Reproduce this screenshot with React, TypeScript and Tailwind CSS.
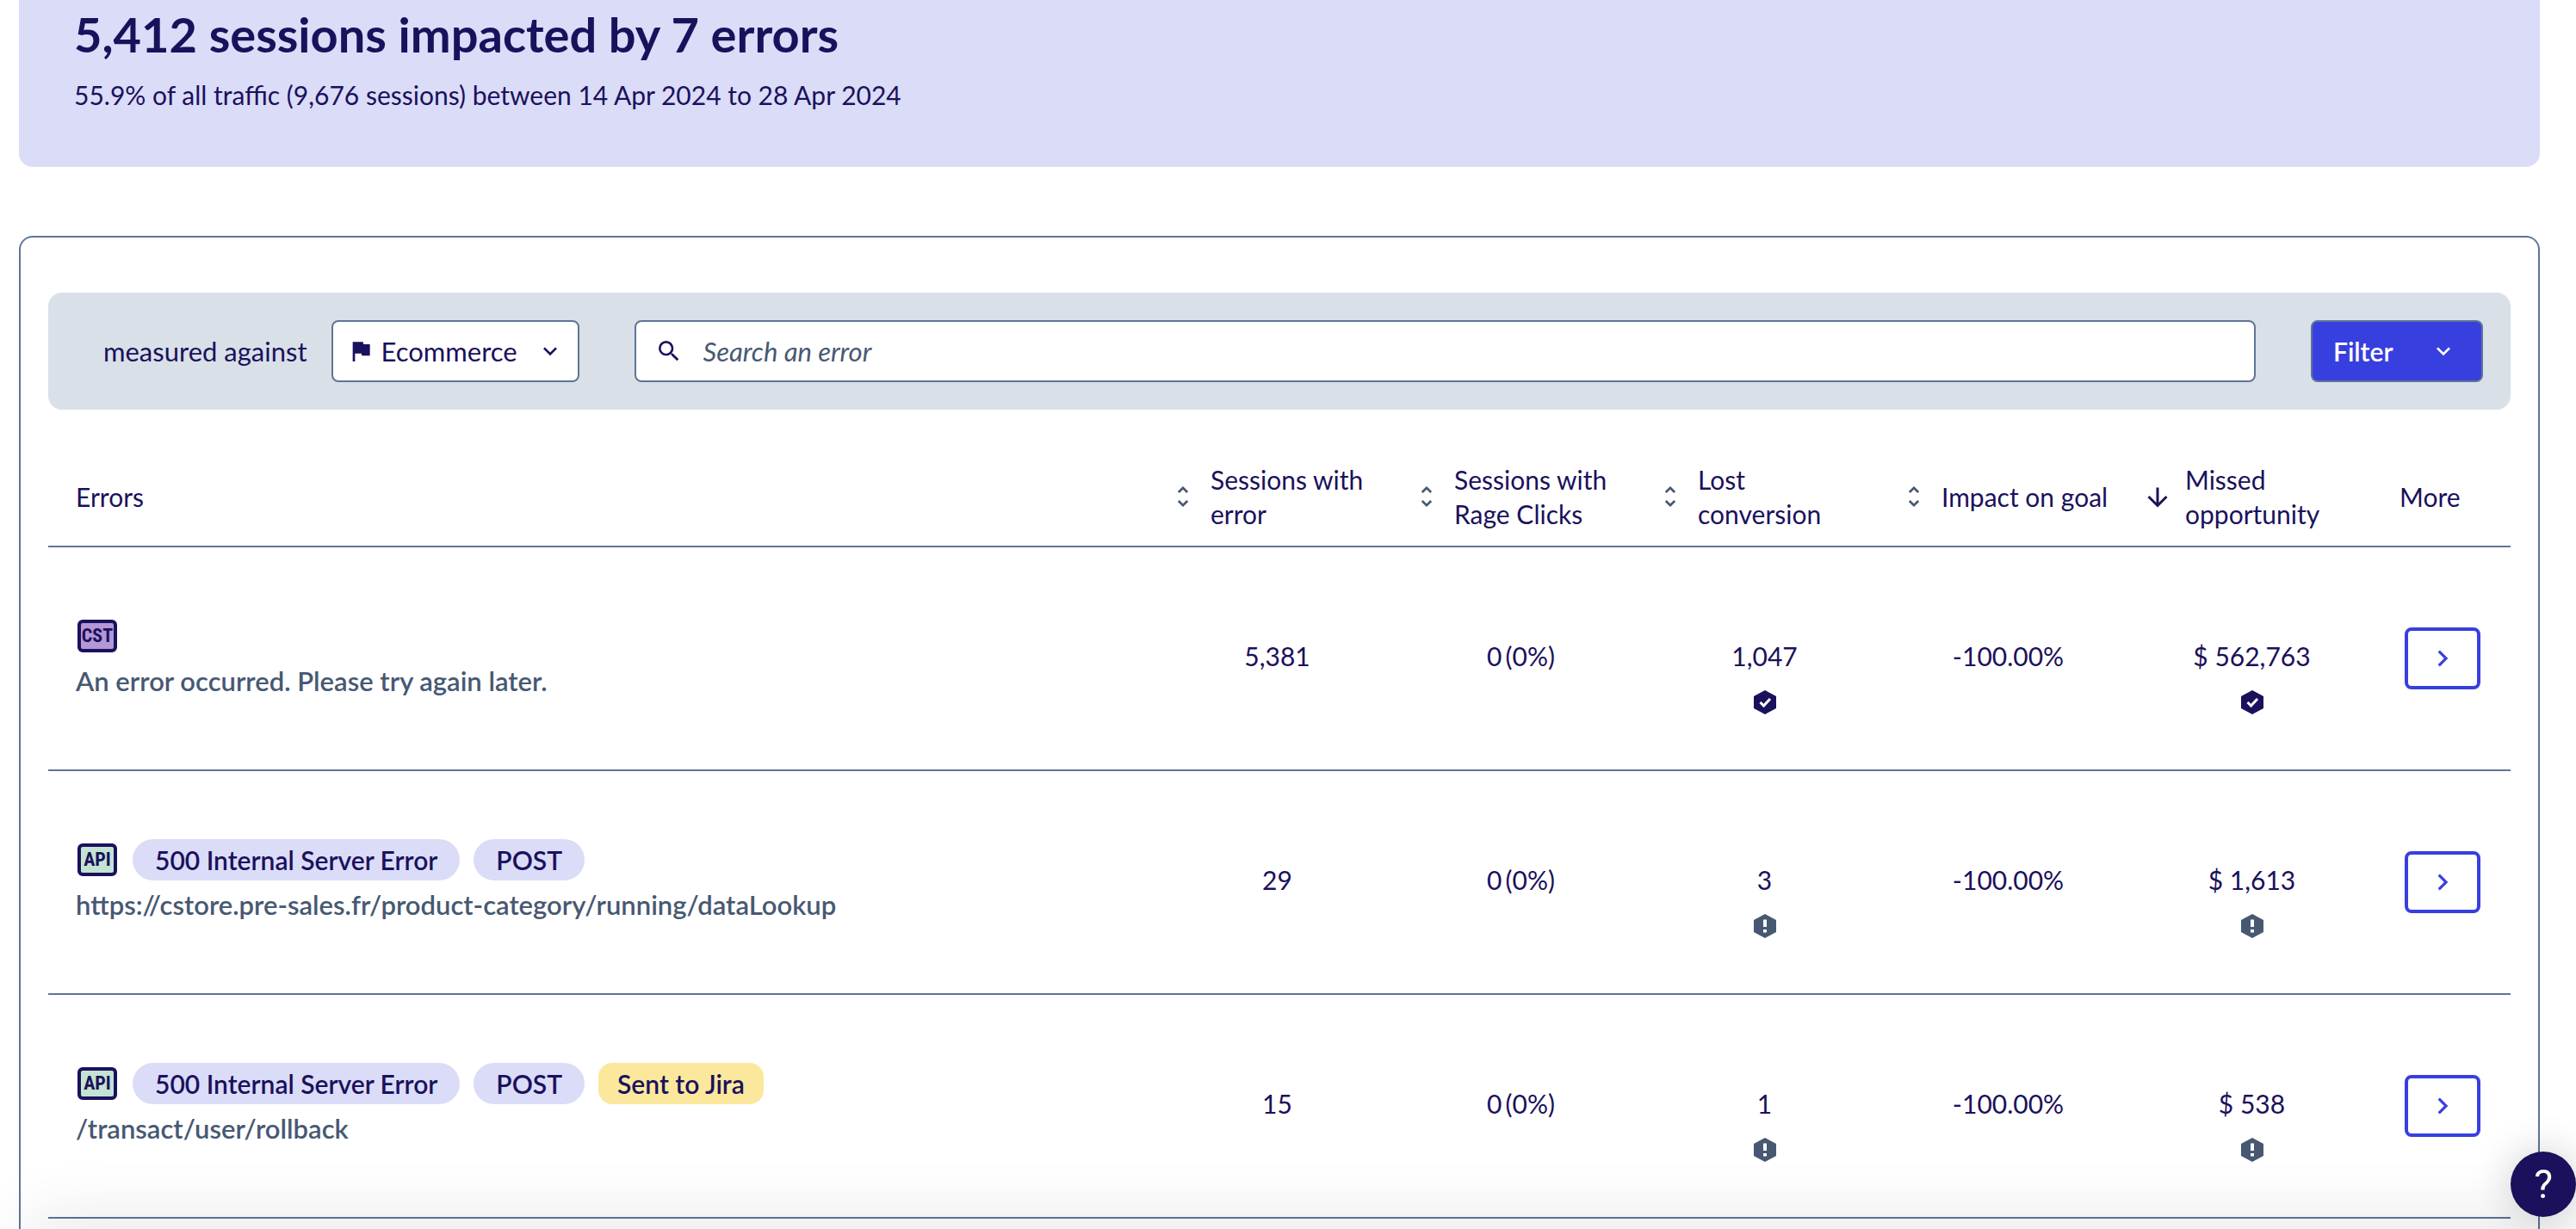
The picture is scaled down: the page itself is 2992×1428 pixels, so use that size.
import React from 'react';
import { ArrowDown } from 'lucide-react';
import { MdFlag, MdSearch, MdExpandMore, MdChevronRight, MdUnfoldMore } from 'react-icons/md';

type ErrorKind = 'CST' | 'API';

interface ErrorRow {
  kind: ErrorKind;
  status?: string;
  method?: string;
  jira?: boolean;
  message: string;
  sessions: string;
  lost: string;
  impact: string;
  missed: string;
  reliable: boolean;
}

const rows: ErrorRow[] = [
  {
    kind: 'CST',
    message: 'An error occurred. Please try again later.',
    sessions: '5,381',
    lost: '1,047',
    impact: '-100.00%',
    missed: '$ 562,763',
    reliable: true,
  },
  {
    kind: 'API',
    status: '500 Internal Server Error',
    method: 'POST',
    message: 'https://cstore.pre-sales.fr/product-category/running/dataLookup',
    sessions: '29',
    lost: '3',
    impact: '-100.00%',
    missed: '$ 1,613',
    reliable: false,
  },
  {
    kind: 'API',
    status: '500 Internal Server Error',
    method: 'POST',
    jira: true,
    message: '/transact/user/rollback',
    sessions: '15',
    lost: '1',
    impact: '-100.00%',
    missed: '$ 538',
    reliable: false,
  },
];

const columns = ['Sessions with error', 'Sessions with Rage Clicks', 'Lost conversion', 'Impact on goal'];

const KindBadge = ({ kind }: { kind: ErrorKind }) => (
  <span
    className={`mx-0.5 flex h-[38px] w-[46px] items-center justify-center rounded-md border-4 border-[#1a115c] font-['Roboto_Condensed','Liberation_Sans',sans-serif] text-[22px] leading-none font-bold ${
      kind === 'CST' ? 'bg-[#b497d6]' : 'bg-[#c3e3d3]'
    }`}
  >
    {kind}
  </span>
);

const Reliability = ({ ok }: { ok: boolean }) => (
  <svg viewBox="0 0 26 28" className="h-7 w-[26px]" aria-hidden="true">
    <path d="M13 0 26 7V21L13 28 0 21V7Z" fill={ok ? '#1a115c' : '#475872'} />
    {ok ? (
      <path d="M7.5 14 11.5 18 19 10" fill="none" stroke="#fff" strokeWidth="3" />
    ) : (
      <path d="M11 6.5h4v8.5h-4zM11 18h4v3.5h-4z" fill="#fff" />
    )}
  </svg>
);

const Metric = ({ value, share, ok }: { value: string; share?: string; ok?: boolean }) => (
  <td className="p-0 align-top">
    <div className="flex flex-col items-center gap-5 pt-[106px]">
      <span className="flex gap-1 leading-10">
        {value}
        {share && <span>{share}</span>}
      </span>
      {ok !== undefined && <Reliability ok={ok} />}
    </div>
  </td>
);

export default function App() {
  return (
    <div className="flex h-screen flex-col overflow-hidden bg-white pr-[42px] pl-[22px] font-[Lato,sans-serif] text-[30px] text-[#1a115c]">
      {/* Summary banner */}
      <header className="rounded-b-2xl bg-[#dbdcf8] px-16 pb-16">
        <h1 className="text-[56px] leading-[80px] font-bold">5,412 sessions impacted by 7 errors</h1>
        <p className="mt-2.5 leading-10">55.9% of all traffic (9,676 sessions) between 14 Apr 2024 to 28 Apr 2024</p>
      </header>

      <main className="mt-20 flex-1 rounded-t-2xl border-2 border-b-0 border-[#5f7595] px-8 pt-16">
        {/* Toolbar */}
        <div className="flex items-center gap-16 rounded-2xl bg-[#d9e0e8] p-8">
          <div className="flex items-center gap-7 pl-8 text-[31px] leading-10">
            <span id="measured">measured against</span>
            <button
              type="button"
              aria-labelledby="measured goal"
              className="flex h-[72px] w-[288px] items-center rounded-lg border-2 border-[#5f7595] bg-white px-4"
            >
              <MdFlag className="size-8" />
              <span id="goal" className="ml-2 flex-1 text-left">Ecommerce</span>
              <MdExpandMore className="size-8" />
            </button>
          </div>
          <label className="flex h-[72px] flex-1 items-center gap-6 rounded-lg border-2 border-[#5f7595] bg-white px-[22px] text-[31px]">
            <MdSearch className="size-8" />
            <input
              type="text"
              aria-label="Search an error"
              placeholder="Search an error"
              className="flex-1 italic outline-none placeholder:text-[#475872]"
            />
          </label>
          <button
            type="button"
            className="flex h-[72px] w-[200px] items-center justify-between rounded-lg border-2 border-[#5f7595] bg-[#383fdf] pr-7 pl-6 leading-10 font-semibold text-white"
          >
            Filter
            <MdExpandMore className="size-8" />
          </button>
        </div>

        {/* Errors table */}
        <table className="mt-[39px] w-full table-fixed border-collapse">
          <thead>
            <tr className="h-[120px] border-b-2 border-[#5f7595] text-left leading-10">
              <th className="p-0 pt-1 pl-8 font-normal">Errors</th>
              {columns.map((label) => (
                <th key={label} className="w-[283px] p-0 pt-1 pr-5 font-normal">
                  <button type="button" className="flex items-center text-left">
                    <span className="flex w-16 shrink-0 justify-center text-[#475872]">
                      <MdUnfoldMore className="size-8" />
                    </span>
                    {label}
                  </button>
                </th>
              ))}
              <th className="w-[283px] p-0 pt-1 pr-5 font-normal" aria-sort="descending">
                <button type="button" className="flex items-center text-left">
                  <span className="flex w-16 shrink-0 justify-center">
                    <ArrowDown className="size-9" strokeLinecap="butt" strokeLinejoin="miter" />
                  </span>
                  Missed opportunity
                </button>
              </th>
              <th className="w-[159px] p-0 pt-1 pl-[30px] font-normal">More</th>
            </tr>
          </thead>
          <tbody>
            {rows.map((row) => (
              <tr key={row.message} className="h-[260px] border-b-2 border-[#5f7595]">
                <td className="p-0 pb-1 pl-8">
                  <div className="flex h-12 items-center gap-4 font-semibold">
                    <KindBadge kind={row.kind} />
                    {row.status && <span className="rounded-full bg-[#dbdcf8] px-[26px] leading-[48px]">{row.status}</span>}
                    {row.method && <span className="rounded-full bg-[#dbdcf8] px-[26px] leading-[48px]">{row.method}</span>}
                    {row.jira && <span className="rounded-2xl bg-[#fbe89d] px-[22px] leading-[48px]">Sent to Jira</span>}
                  </div>
                  <p className="mt-2 text-[31px] leading-10 font-semibold text-[#475872]">{row.message}</p>
                </td>
                <Metric value={row.sessions} />
                <Metric value="0" share="(0%)" />
                <Metric value={row.lost} ok={row.reliable} />
                <Metric value={row.impact} />
                <Metric value={row.missed} ok={row.reliable} />
                <td className="p-0 text-center">
                  <button
                    type="button"
                    aria-label="More details"
                    className="inline-flex h-[72px] w-[88px] items-center justify-center rounded-lg border-4 border-[#383fdf] align-middle text-[#383fdf]"
                  >
                    <MdChevronRight className="size-[38px]" />
                  </button>
                </td>
              </tr>
            ))}
          </tbody>
        </table>
      </main>

      {/* Shade cast upward from the bottom edge */}
      <div className="pointer-events-none fixed right-0 -bottom-10 left-8 h-10 shadow-[0_0_80px_rgba(0,0,0,0.16)]" />

      <button
        type="button"
        aria-label="Help"
        className="fixed right-0 bottom-3.5 flex size-[76px] items-center justify-center rounded-full bg-[#1a115c] font-[Roboto,sans-serif] text-[46px] leading-none text-white shadow-[0_0_48px_rgba(0,0,0,0.2)]"
      >
        ?
      </button>
    </div>
  );
}
